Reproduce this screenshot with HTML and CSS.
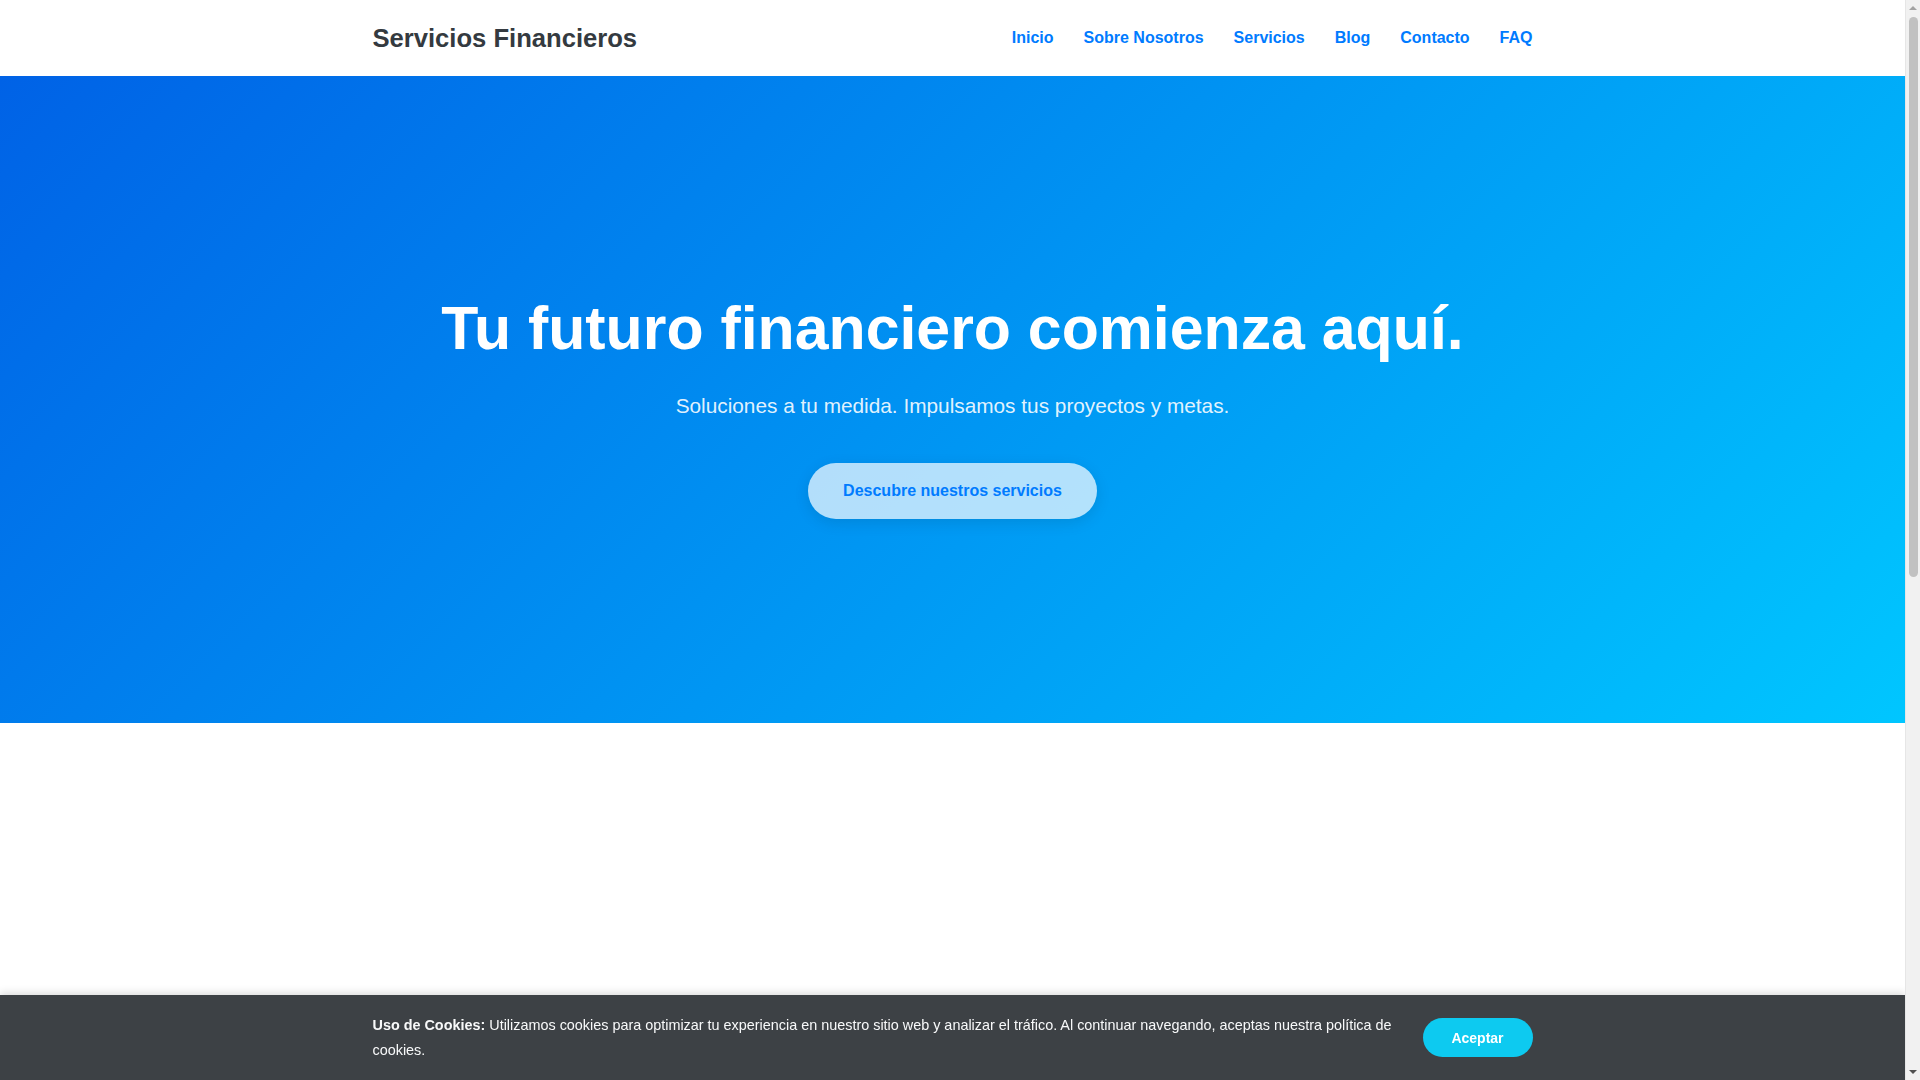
FILE: index.html
```html
<!DOCTYPE html>
<html lang="es">
<head>
<meta charset="utf-8">
<title>Servicios Financieros</title>
<link rel="stylesheet" href="styles.css">
</head>
<body>
<header class="site-header">
  <div class="container header-inner">
    <a class="logo" href="#">Servicios Financieros</a>
    <nav class="main-nav">
      <a href="#">Inicio</a>
      <a href="#">Sobre Nosotros</a>
      <a href="#">Servicios</a>
      <a href="#">Blog</a>
      <a href="#">Contacto</a>
      <a href="#">FAQ</a>
    </nav>
  </div>
</header>

<section class="hero">
  <div class="container hero-inner">
    <h1 class="hero-title">Tu futuro financiero comienza aquí.</h1>
    <p class="hero-sub">Soluciones a tu medida. Impulsamos tus proyectos y metas.</p>
    <a class="hero-btn" href="#">Descubre nuestros servicios</a>
  </div>
</section>

<section class="services"></section>

<div class="cookie-bar">
  <div class="container cookie-inner">
    <p class="cookie-text"><strong>Uso de Cookies:</strong> Utilizamos cookies para optimizar tu experiencia en nuestro sitio web y analizar el tráfico. Al continuar navegando, aceptas nuestra política de cookies.</p>
    <button class="cookie-btn" type="button">Aceptar</button>
  </div>
</div>

<div class="fake-scrollbar" aria-hidden="true">
  <span class="sb-arrow sb-up"></span>
  <span class="sb-thumb"></span>
  <span class="sb-arrow sb-down"></span>
</div>
</body>
</html>
```

FILE: styles.css
```css
* {
  box-sizing: border-box;
}

html, body {
  margin: 0;
  padding: 0;
}

html {
  scrollbar-width: none;
}

html::-webkit-scrollbar {
  display: none;
}

body {
  font-family: "Liberation Sans", Arial, sans-serif;
  color: #343a40;
  background: #ffffff;
  padding-right: 15px;
}

.container {
  max-width: 1200px;
  margin: 0 auto;
  padding: 0 20px;
}

.site-header {
  background: #ffffff;
}

.header-inner {
  height: 76px;
  display: flex;
  align-items: center;
  justify-content: space-between;
}

.logo {
  font-size: 25.6px;
  font-weight: 700;
  color: #343a40;
  text-decoration: none;
}

.main-nav {
  display: flex;
  gap: 30px;
}

.main-nav a {
  font-size: 16px;
  font-weight: 700;
  color: #007bff;
  text-decoration: none;
}

.hero {
  background: linear-gradient(135deg, #0062e6 0%, #00c6ff 100%);
  color: #ffffff;
  text-align: center;
  padding: 216px 0 204px;
}

.hero-inner {
  display: flex;
  flex-direction: column;
  align-items: center;
}

.hero-title {
  margin: 0 0 26px;
  font-size: 60.8px;
  line-height: 72px;
  font-weight: 700;
}

.hero-sub {
  margin: 0 0 42px;
  font-size: 20.8px;
  line-height: 31px;
  color: rgba(255, 255, 255, 0.9);
}

.hero-btn {
  display: inline-block;
  padding: 18px 35px;
  font-size: 16px;
  line-height: 20px;
  font-weight: 700;
  color: #007bff;
  background: rgba(255, 255, 255, 0.7);
  border-radius: 30px;
  text-decoration: none;
  box-shadow: 0 4px 15px rgba(0, 0, 0, 0.1);
}

.services {
  min-height: 900px;
  background: #ffffff;
}

.cookie-bar {
  position: fixed;
  left: 0;
  right: 15px;
  bottom: 0;
  background: #3d4145;
  color: #f8f9fa;
  padding: 18px 0;
  box-shadow: 0 -2px 8px rgba(0, 0, 0, 0.15);
}

.cookie-inner {
  display: flex;
  align-items: center;
  gap: 20px;
}

.cookie-text {
  flex: 1;
  margin: 0;
  font-size: 14.4px;
  line-height: 24.5px;
}

.cookie-text strong {
  font-weight: 700;
}

.cookie-btn {
  flex: none;
  width: 110px;
  height: 39px;
  border: none;
  border-radius: 20px;
  background: #0dcaf0;
  color: #ffffff;
  font-family: "Liberation Sans", Arial, sans-serif;
  font-size: 14px;
  font-weight: 700;
  cursor: pointer;
}

.fake-scrollbar {
  position: fixed;
  top: 0;
  right: 0;
  bottom: 0;
  width: 15px;
  background: #f1f1f1;
  border-left: 1px solid #e6e6e6;
  display: flex;
  flex-direction: column;
  align-items: center;
}

.sb-arrow {
  flex: none;
  width: 0;
  height: 0;
  margin: 6px 0;
  border-left: 4px solid transparent;
  border-right: 4px solid transparent;
}

.sb-up {
  border-bottom: 4px solid #a3a3a3;
}

.sb-down {
  margin-top: auto;
  border-top: 4px solid #505050;
}

.sb-thumb {
  flex: none;
  width: 9px;
  height: 560px;
  margin-top: 1px;
  border-radius: 5px;
  background: #c1c1c1;
}
```
